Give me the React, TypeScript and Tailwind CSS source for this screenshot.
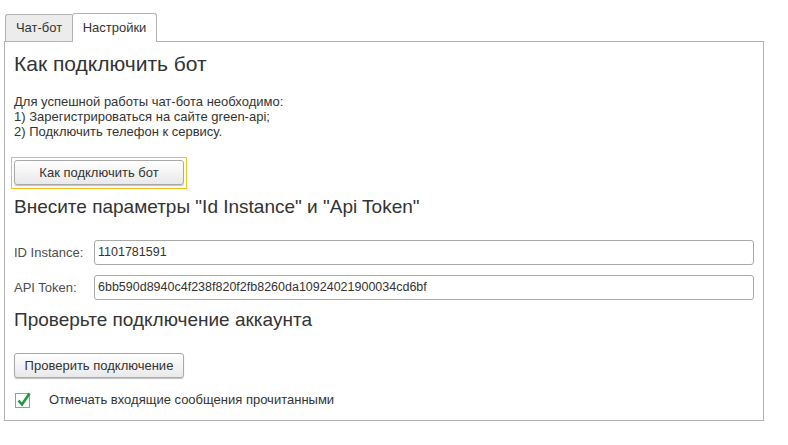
import React from "react";

function Btn({ children, w }: { children: React.ReactNode; w: string }) {
  return (
    <div
      className={`${w} h-[25px] rounded-[3px] border border-[#a9a9a9] bg-gradient-to-b from-[#ffffff] to-[#e9e9e9] shadow-[0_1px_1px_rgba(0,0,0,0.25)] flex items-center justify-center text-[13px] text-[#333]`}
    >
      {children}
    </div>
  );
}

function Field({ label, value }: { label: string; value: string }) {
  return (
    <div className="flex items-center h-[25px]">
      <div className="w-[80px] text-[13px] text-[#4d4d4d]">{label}</div>
      <div className="w-[660px] h-[25px] rounded-[3px] border border-[#a9a9a9] bg-white flex items-center pl-[3px] text-[12.5px] text-[#333]">
        {value}
      </div>
    </div>
  );
}

export default function App() {
  return (
    <div
      className="w-[788px] h-[445px] bg-white pl-[4px] pt-[13px]"
      style={{ fontFamily: '"Liberation Sans", Arial, sans-serif' }}
    >
      <div className="flex items-end h-[28px] pl-[1px]">
        <div className="w-[67px] h-[27px] bg-[#ececec] border-l border-t border-[#b3b3b3] rounded-tl-[3px] flex items-center justify-center text-[13px] text-[#333]">
          Чат-бот
        </div>
        <div className="relative z-10 w-[85px] h-[29px] -mb-px bg-white border-l border-t border-r border-[#b3b3b3] rounded-t-[3px] flex items-center justify-center text-[13px] text-[#333] pb-[1px]">
          Настройки
        </div>
      </div>
      <div className="w-[760px] h-[380px] border border-[#b3b3b3] pl-[9px] flex flex-col">
        <div className="mt-[10px] h-[24px] leading-[24px] text-[21px] text-[#333]">
          Как подключить бот
        </div>
        <div className="mt-[18px] text-[13px] leading-[15px] text-[#333]">
          <div>Для успешной работы чат-бота необходимо:</div>
          <div>1) Зарегистрироваться на сайте green-api;</div>
          <div>2) Подключить телефон к сервису.</div>
        </div>
        <div className="mt-[18px] -ml-[3px] w-[176px] h-[32px] border border-[#f2c21b] p-[2px]">
          <Btn w="w-[170px]">Как подключить бот</Btn>
        </div>
        <div className="mt-[7px] h-[22px] leading-[22px] text-[19px] text-[#333]">
          Внесите параметры "Id Instance" и "Api Token"
        </div>
        <div className="mt-[22px]">
          <Field label="ID Instance:" value="1101781591" />
        </div>
        <div className="mt-[10px]">
          <Field label="API Token:" value="6bb590d8940c4f238f820f2fb8260da10924021900034cd6bf" />
        </div>
        <div className="mt-[9px] h-[22px] leading-[22px] text-[19px] text-[#333]">
          Проверьте подключение аккаунта
        </div>
        <div className="mt-[22px]">
          <Btn w="w-[170px]">Проверить подключение</Btn>
        </div>
        <div className="mt-[14px] flex items-center h-[16px]">
          <div className="relative ml-[1px] w-[15px] h-[15px] border border-[#9a9a9a] bg-white">
            <svg className="absolute left-[1px] top-[-2px]" width="14" height="15" viewBox="0 0 14 15">
              <path d="M1.5 8.5 L5 12.5 L12.5 1.5" fill="none" stroke="#1f9a3a" strokeWidth="2.6" strokeLinejoin="miter" />
            </svg>
          </div>
          <div className="ml-[19px] text-[13px] text-[#333]">Отмечать входящие сообщения прочитанными</div>
        </div>
      </div>
    </div>
  );
}
